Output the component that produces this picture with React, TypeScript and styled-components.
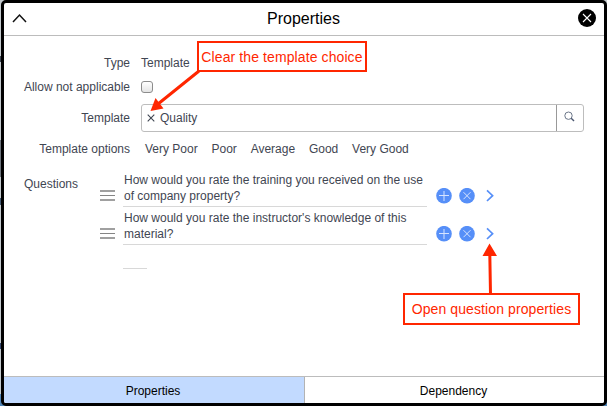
import React from "react";
import styled, { createGlobalStyle } from "styled-components";

const GlobalStyle = createGlobalStyle`
  * { box-sizing: border-box; }
  body {
    margin: 0;
    overflow: hidden;
    font-family: "Liberation Sans", Arial, Helvetica, sans-serif;
    font-size: 12px;
    line-height: 16px;
    color: #3f4652;
  }
`;

const Backdrop = styled.div`
  position: relative;
  width: 607px;
  height: 406px;
  padding-left: 1px;
  background: linear-gradient(
    #c4cace 0 56px, #3c4450 56px 62px, #c4cace 62px 140px, #6d747c 140px 177px,
    #c4cace 177px 198px, #40566f 198px 205px, #c4cace 205px 343px,
    #33466e 343px 349px, #c4cace 349px 394px, #4f84b5 394px);
`;

const Dialog = styled.div`
  display: flex;
  flex-direction: column;
  width: 606px;
  height: 406px;
  border: 3px solid #000;
  border-radius: 5px;
  background: #fff;
  overflow: hidden;
`;

const Header = styled.header`
  display: flex;
  flex: none;
  align-items: center;
  justify-content: space-between;
  height: 33px;
  padding: 0 8px 2px 8px;
  border-bottom: 1px solid #bcbcbc;
`;

const Title = styled.h1`
  margin: 0;
  padding: 2px 0 0 2px;
  font-size: 16px;
  font-weight: 400;
  line-height: 20px;
  color: #000;
`;

const IconButton = styled.button`
  display: flex;
  flex: none;
  align-items: center;
  justify-content: center;
  padding: 0;
  border: 0;
  background: none;
`;

const Form = styled.main`
  display: flex;
  flex: 1;
  flex-direction: column;
  padding-top: 15px;
`;

const Row = styled.div<{ $height: number }>`
  display: grid;
  grid-template-columns: 126px 443px;
  column-gap: 11px;
  align-items: center;
  height: ${(p) => p.$height}px;
`;

const Label = styled.div`
  text-align: right;
  white-space: nowrap;
`;

const Checkbox = styled.input`
  appearance: none;
  display: block;
  width: 12px;
  height: 12px;
  margin: 0;
  border: 1px solid #8c8c8c;
  border-radius: 3px;
  background: linear-gradient(#fff, #e4e4e4);
`;

const Lookup = styled.div`
  display: flex;
  height: 28px;
  border: 1px solid #bdbdbd;
  border-radius: 3px;
`;

const Chosen = styled.div`
  display: flex;
  flex: 1;
  align-items: center;
  gap: 5px;
  padding-left: 5px;
`;

const SearchButton = styled(IconButton)`
  width: 27px;
  padding: 0 2px 3px 0;
  border-left: 1px solid #999;
`;

const Options = styled.div`
  display: flex;
  gap: 13.8px;
  padding-left: 4px;
  white-space: nowrap;
`;

const QuestionSection = styled.section`
  display: grid;
  grid-template-columns: 96px 1fr;
  padding: 8px 0 0 0;
`;

const SectionLabel = styled.div`
  padding: 7px 0 0 20px;
`;

const QuestionRow = styled.div`
  display: flex;
  align-items: flex-end;
  height: 38px;
`;

const QuestionText = styled.div`
  width: 304px;
  height: 36px;
  margin: 0 9px 0 8px;
  padding: 1px 0 2px 1px;
  border-bottom: 1px solid #d8d8d8;
  white-space: pre-line;
`;

const Actions = styled.div`
  display: flex;
  align-items: center;
  gap: 7px;
  padding-bottom: 3px;
`;

const Handle = styled.div`
  display: flex;
  padding-bottom: 6px;
`;

const EmptyQuestion = styled.div`
  width: 24px;
  height: 24px;
  margin-left: 23px;
  border-bottom: 1px solid #d8d8d8;
`;

const Tabs = styled.nav`
  display: flex;
  flex: none;
  height: 27px;
  border-top: 1px solid #bcbcbc;
`;

const Tab = styled.button<{ $active?: boolean }>`
  flex: ${(p) => (p.$active ? "0 0 301px" : "1")};
  padding: 2px 2px 0 0;
  border: 0;
  border-right: ${(p) => (p.$active ? "1px solid #b3b3b3" : "0")};
  background: ${(p) => (p.$active ? "#c2daff" : "#fff")};
  font: inherit;
  color: #000;
`;

const Callout = styled.div<{ $x: number; $y: number; $w: number; $h: number }>`
  position: absolute;
  left: ${(p) => p.$x}px;
  top: ${(p) => p.$y}px;
  display: flex;
  align-items: center;
  justify-content: center;
  width: ${(p) => p.$w}px;
  height: ${(p) => p.$h}px;
  border: 2px solid #ff2600;
  background: #fff;
  font-size: 14px;
  letter-spacing: 0.1px;
  white-space: nowrap;
  color: #ff2600;
`;

const Arrows = styled.svg`
  position: absolute;
  inset: 0;
  pointer-events: none;
`;

const DragIcon = () => (
  <svg width="15" height="11" viewBox="0 0 15 11">
    <path d="M0 1h15M0 10h15" stroke="#a0a0a0" strokeWidth="2" />
    <path d="M0 5.5h15" stroke="#858585" strokeWidth="1" />
  </svg>
);

const CircleIcon = ({ kind }: { kind: "add" | "remove" }) => (
  <svg width="16" height="16" viewBox="0 0 16 16">
    <circle cx="8" cy="7.7" r="7.8" fill="#568ff8" />
    <path
      d={kind === "add" ? "M3 7.5h10M8 3v10" : "M4.5 4.2l7 7M11.5 4.2l-7 7"}
      stroke="#d6e4ff"
      strokeWidth="1"
    />
  </svg>
);

const questions = [
  "How would you rate the training you received on the use\nof company property?",
  "How would you rate the instructor's knowledge of this\nmaterial?",
];

const options = ["Very Poor", "Poor", "Average", "Good", "Very Good"];

export default function App() {
  return (
    <>
      <GlobalStyle />
      <Backdrop>
        <Dialog>
          <Header>
            <IconButton aria-label="Collapse">
              <svg width="15" height="10" viewBox="0 0 15 10">
                <path d="M1 9L7.5 2L14 9" fill="none" stroke="#111" strokeWidth="1.5" />
              </svg>
            </IconButton>
            <Title>Properties</Title>
            <IconButton aria-label="Close">
              <svg width="18" height="18" viewBox="0 0 18 18">
                <circle cx="9" cy="9" r="9" fill="#000" />
                <path d="M5 5l8 8M13 5l-8 8" stroke="#fff" strokeWidth="1.1" />
              </svg>
            </IconButton>
          </Header>
          <Form>
            <Row $height={24}>
              <Label>Type</Label>
              <div>Template</div>
            </Row>
            <Row $height={24}>
              <Label>Allow not applicable</Label>
              <Checkbox type="checkbox" aria-label="Allow not applicable" />
            </Row>
            <Row $height={38}>
              <Label>Template</Label>
              <Lookup>
                <Chosen>
                  <svg width="8" height="8" viewBox="0 0 8 8">
                    <path d="M.7.7l6.6 6.6M7.3.7L.7 7.3" stroke="#3f4652" strokeWidth="1.1" />
                  </svg>
                  <span>Quality</span>
                </Chosen>
                <SearchButton aria-label="Search">
                  <svg width="11" height="11" viewBox="0 0 11 11">
                    <circle cx="4.5" cy="4.7" r="3.7" fill="none" stroke="#6b7688" strokeWidth="1" />
                    <path d="M7.2 7.3L10 10" stroke="#4a5670" strokeWidth="1.4" />
                  </svg>
                </SearchButton>
              </Lookup>
            </Row>
            <Row $height={24}>
              <Label>Template options</Label>
              <Options>
                {options.map((o) => (
                  <span key={o}>{o}</span>
                ))}
              </Options>
            </Row>
            <QuestionSection>
              <SectionLabel>Questions</SectionLabel>
              <div>
                {questions.map((q) => (
                  <QuestionRow key={q}>
                    <Handle>
                      <DragIcon />
                    </Handle>
                    <QuestionText>{q}</QuestionText>
                    <Actions>
                      <CircleIcon kind="add" />
                      <CircleIcon kind="remove" />
                      <svg width="16" height="16" viewBox="0 0 16 16">
                        <path d="M5 2.4L10.6 7.7L5 13" fill="none" stroke="#568ff8" strokeWidth="1.7" />
                      </svg>
                    </Actions>
                  </QuestionRow>
                ))}
                <EmptyQuestion />
              </div>
            </QuestionSection>
          </Form>
          <Tabs>
            <Tab $active>Properties</Tab>
            <Tab>Dependency</Tab>
          </Tabs>
        </Dialog>
        <Callout $x={197} $y={41} $w={170} $h={31}>
          Clear the template choice
        </Callout>
        <Callout $x={403} $y={293} $w={177} $h={32}>
          Open question properties
        </Callout>
        <Arrows width="607" height="406" viewBox="0 0 607 406">
          <path d="M199 71L158 104M490.5 294L489.8 254" stroke="#ff2600" strokeWidth="3" />
          <path d="M150.5 111L155.5 98L163.5 108.5ZM489.5 243.5L497 256H482.5Z" fill="#ff2600" />
        </Arrows>
      </Backdrop>
    </>
  );
}
